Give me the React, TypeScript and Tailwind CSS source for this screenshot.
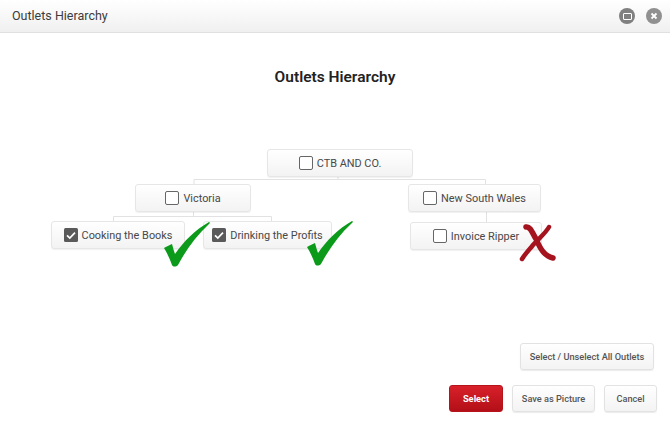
import React from 'react';

const font = { fontFamily: 'Roboto, "Liberation Sans", sans-serif' };

const Box: React.FC<{ checked?: boolean }> = ({ checked }) =>
  checked ? (
    <svg viewBox="0 0 14 14" className="w-[14px] h-[14px] shrink-0">
      <rect width="14" height="14" rx="1.5" fill="#5a5a5a" />
      <path d="M3 7.3l2.8 2.7 5.2-5.4" fill="none" stroke="#fff" strokeWidth="1.7" />
    </svg>
  ) : (
    <span className="w-[14px] h-[14px] shrink-0 rounded-[2px] border-[1.5px] border-[#666] bg-white"></span>
  );

const Node: React.FC<{ label: string; checked?: boolean; className: string }> = ({ label, checked, className }) => (
  <div className={`absolute flex items-center justify-center gap-[4px] rounded-[3px] border border-[#e6e6e6] bg-gradient-to-b from-white to-[#f3f3f3] text-[10.9px] text-[#484848] shadow-[0_1px_1px_rgba(0,0,0,0.06)] ${className}`}>
    <Box checked={checked} />
    <span className="mt-[2px]">{label}</span>
  </div>
);

const Tick: React.FC<{ className: string }> = ({ className }) => (
  <svg viewBox="0 0 48 46" className={`absolute w-[48px] h-[46px] ${className}`}>
    <path d="M1 27 C4 25 7 24 9 23 C10 27 11 30 12 33 C21 20 32 9 46 1 C47 1 47 2 46 3 C33 15 23 29 15 44 C13 46 10 46 9 44 C7 38 4 32 1 27Z" fill="#0c9a1a" />
  </svg>
);

const Btn: React.FC<{ children: React.ReactNode; className?: string }> = ({ children, className = '' }) => (
  <button className={`h-[27px] rounded-[3px] border border-[#e2e2e2] bg-gradient-to-b from-white to-[#f3f3f3] text-[9.2px] font-medium text-[#555] shadow-[0_1px_1px_rgba(0,0,0,0.08)] ${className}`}>
    {children}
  </button>
);

const App: React.FC = () => {
  return (
    <div className="w-[670px] h-[425px] flex flex-col bg-white overflow-hidden" style={font}>
      {/* Header */}
      <div className="h-[33px] shrink-0 flex items-center justify-between pl-3 pr-2 bg-gradient-to-b from-white to-[#f0f0f0] border-b border-[#e0e0e0]">
        <span className="text-[12.5px] text-[#3c3c3c]">Outlets Hierarchy</span>
        <div className="flex items-center gap-[11px]">
          <span className="w-4 h-4 rounded-full bg-[#808080] flex items-center justify-center">
            <span className="w-[9px] h-[7px] border-[1.5px] border-white rounded-[1px]"></span>
          </span>
          <span className="w-4 h-4 rounded-full bg-[#909090] flex items-center justify-center">
            <svg viewBox="0 0 8 8" className="w-2 h-2">
              <path d="M1.5 1.5l5 5M6.5 1.5l-5 5" stroke="#fff" strokeWidth="1.8" />
            </svg>
          </span>
        </div>
      </div>

      <h1 className="pt-[34px] text-center text-[15.5px] leading-5 font-semibold text-[#222]">Outlets Hierarchy</h1>

      {/* Org chart */}
      <div className="relative mt-[53px] h-[130px]">
        <svg className="absolute inset-0 w-full h-full" fill="none" stroke="#e2e2e2">
          <path d="M338 36v3.5M194 44v-4.5h291.5V44M193.500 71v5.500M113.500 81v-4.500h158V81M486.500 71v11" />
        </svg>
        <Node label="CTB AND CO." className="left-[267px] top-[9px] w-[146px] h-[28px]" />
        <Node label="Victoria" className="left-[135px] top-[44px] w-[116px] h-[28px]" />
        <Node label="New South Wales" className="left-[408px] top-[44px] w-[133px] h-[28px]" />
        <Node label="Cooking the Books" checked className="left-[51px] top-[81px] w-[134px] h-[28px]" />
        <Node label="Drinking the Profits" checked className="left-[203px] top-[81px] w-[129px] h-[28px]" />
        <Node label="Invoice Ripper" className="left-[410px] top-[82px] w-[132px] h-[28px]" />
        <Tick className="left-[163px] top-[81px]" />
        <Tick className="left-[306px] top-[80px]" />
        <svg viewBox="0 0 38 38" className="absolute left-[518px] top-[84px] w-[38px] h-[38px]" fill="none" stroke="#a5141e" strokeLinecap="round">
          <path d="M8 3 C12 2 14 8 18 15 C22 24 26 32 35 34" strokeWidth="5.500" />
          <path d="M31 3 C27 10 21 14 15 21 C11 26 7 30 4 35" strokeWidth="4.500" />
        </svg>
      </div>

      {/* Actions */}
      <div className="mt-auto pb-[13px] flex flex-col items-end">
        <Btn className="w-[134px] mr-4">Select / Unselect All Outlets</Btn>
        <div className="mt-[15px] mr-[13px] flex gap-[9px]">
          <button className="w-[54px] h-[27px] rounded-[3px] border border-[#b5141c] bg-gradient-to-b from-[#d8202a] to-[#b30f18] text-[9.3px] font-bold text-white">
            Select
          </button>
          <Btn className="w-[83px]">Save as Picture</Btn>
          <Btn className="w-[53px]">Cancel</Btn>
        </div>
      </div>
    </div>
  );
};

export default App;
